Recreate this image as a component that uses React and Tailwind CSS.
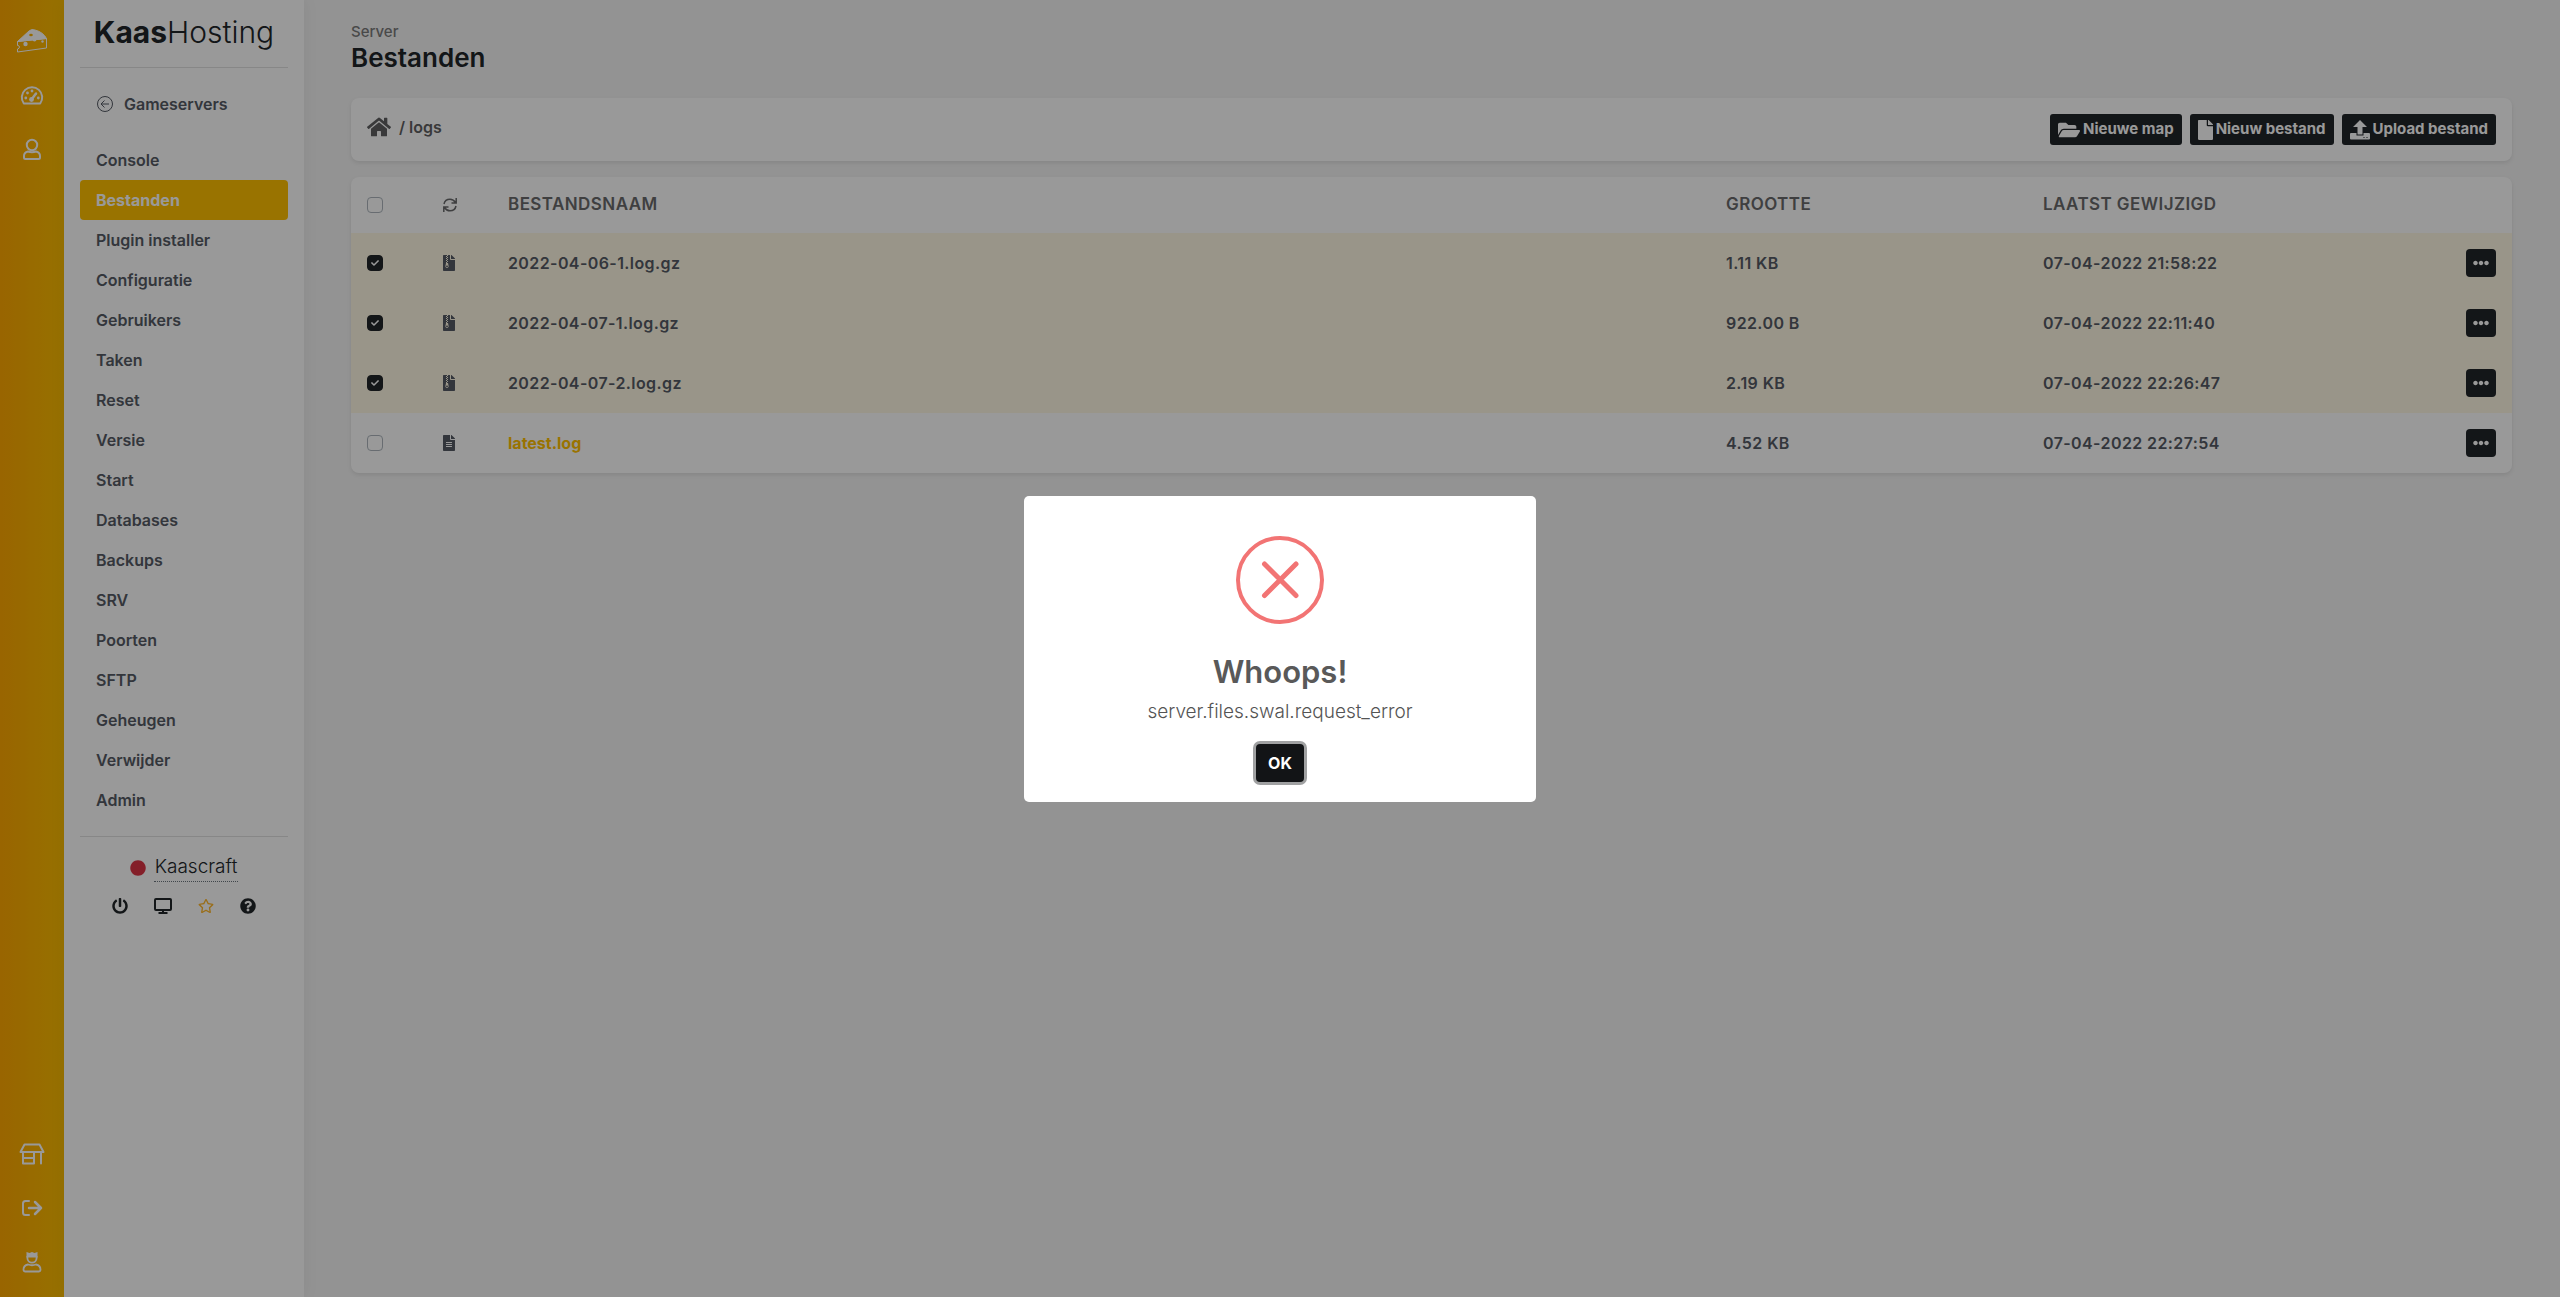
import React, { useState } from 'react';
import {
  FaHome,
  FaFolderOpen,
  FaFile,
  FaFileArchive,
  FaFileAlt,
  FaEllipsisH,
  FaPowerOff,
  FaRegStar,
  FaQuestionCircle,
  FaCircle,
  FaCheck,
} from 'react-icons/fa';

const menuItems = [
  'Console',
  'Bestanden',
  'Plugin installer',
  'Configuratie',
  'Gebruikers',
  'Taken',
  'Reset',
  'Versie',
  'Start',
  'Databases',
  'Backups',
  'SRV',
  'Poorten',
  'SFTP',
  'Geheugen',
  'Verwijder',
  'Admin',
];

const files = [
  { name: '2022-04-06-1.log.gz', size: '1.11 KB', date: '07-04-2022 21:58:22', archive: true },
  { name: '2022-04-07-1.log.gz', size: '922.00 B', date: '07-04-2022 22:11:40', archive: true },
  { name: '2022-04-07-2.log.gz', size: '2.19 KB', date: '07-04-2022 22:26:47', archive: true },
  { name: 'latest.log', size: '4.52 KB', date: '07-04-2022 22:27:54', archive: false },
];

function CheeseIcon() {
  return (
    <svg viewBox="0 0 32 28" className="w-8 h-7" fill="none" stroke="currentColor" strokeWidth="1">
      <path d="M1.500 14.500 13 4Q15.500 1.500 19 3 27 5 30.500 11.500Z" fill="currentColor" />
      <path d="M1.500 14.500 30.500 11.500V21L1.500 25V22Q3.500 21.500 3.500 20T1.500 18.500Z" />
      <circle cx="9.500" cy="17" r="2.200" fill="currentColor" stroke="none" />
      <path d="M16.500 12.500A2 2 0 0 0 20.500 12.500Z" fill="currentColor" stroke="none" />
      <circle cx="26.500" cy="14.500" r="1.200" fill="currentColor" stroke="none" />
      <ellipse cx="15" cy="8" rx="1.800" ry="1.200" fill="#fbb300" stroke="none" />
    </svg>
  );
}

function GaugeIcon() {
  return (
    <svg viewBox="0 0 24 24" className="size-6" fill="none" stroke="currentColor" strokeWidth="2">
      <path d="M3.800 20.500A10.200 10.200 0 1 1 20.200 20.500Z" strokeLinejoin="round" />
      <path d="M11.500 16.500 16 10.500" strokeWidth="2.500" strokeLinecap="round" />
      <g fill="currentColor" stroke="none">
        <circle cx="11.500" cy="16.500" r="2.400" />
        <circle cx="12" cy="8" r="1.400" />
        <circle cx="7.500" cy="10" r="1.400" />
        <circle cx="5.800" cy="15" r="1.400" />
        <circle cx="18.300" cy="15" r="1.400" />
      </g>
    </svg>
  );
}

function UserIcon() {
  return (
    <svg viewBox="0 0 24 24" className="size-6" fill="none" stroke="currentColor" strokeWidth="2">
      <circle cx="12" cy="8" r="5.200" />
      <path
        d="M8 14.500Q4 15.500 4 19V20.500Q4 22 5.500 22H18.500Q20 22 20 20.500V19Q20 15.500 16 14.500 12 16 8 14.500Z"
        strokeLinejoin="round"
      />
    </svg>
  );
}

function ShopIcon() {
  return (
    <svg viewBox="0 0 26 22" className="w-[26px] h-[22px]" fill="none" stroke="currentColor" strokeWidth="2" strokeLinejoin="round" strokeLinecap="round">
      <path d="M5.500 1.500H20.500L24.500 9H1.500Z" />
      <path d="M4 9V20.500H15V9M22 9V20.500M4 15H15" />
    </svg>
  );
}

function LogoutIcon() {
  return (
    <svg viewBox="0 0 22 18" className="w-[22px] h-[18px]" fill="none" stroke="currentColor" strokeWidth="2" strokeLinejoin="round" strokeLinecap="round">
      <path d="M8 2H4.500Q2 2 2 4.500V13.500Q2 16 4.500 16H8" />
      <path d="M8 9H20M14 3 20 9 14 15" strokeWidth="2.500" />
    </svg>
  );
}

function AdminIcon() {
  return (
    <svg viewBox="0 0 20 22" className="w-5 h-[22px]" fill="none" stroke="currentColor" strokeWidth="1.800">
      <path d="M4.500 1 7.500 2 10 1 12.500 2 15.500 1V6.500H4.500Z" fill="currentColor" stroke="none" />
      <path d="M5.400 5V7A4.600 4.600 0 0 0 14.600 7V5" />
      <path
        d="M6 13.500Q1.500 14.500 1.500 18.500 1.500 20.500 3 20.500H17Q18.500 20.500 18.500 18.500 18.500 14.500 14 13.500 10 15 6 13.500Z"
        strokeLinejoin="round"
      />
    </svg>
  );
}

function RefreshIcon() {
  return (
    <svg viewBox="0 0 14 14" className="size-3.5" fill="none" stroke="currentColor" strokeWidth="1.500">
      <path d="M1 6Q2 1.200 7 1.200 10.500 1.200 12.500 4.500M13.200 0V5H8.500" />
      <path d="M13 8Q12 12.800 7 12.800 3.500 12.800 1.500 9.500M.8 14V9H5.500" />
    </svg>
  );
}

function MonitorIcon() {
  return (
    <svg viewBox="0 0 18 16" className="w-[18px] h-4" fill="none" stroke="currentColor" strokeWidth="2">
      <rect x="1" y="1" width="16" height="11" rx="1" />
      <path d="M9 12V15M4.500 15H13.500" />
    </svg>
  );
}

function UploadIcon() {
  return (
    <svg viewBox="0 0 20 20" className="size-5" fill="currentColor">
      <path d="M10 0 17 7H12.500V14.500H7.500V7H3Z" />
      <path d="M1 13H6.500V15.500H13.500V13H19Q20 13 20 14V18.500Q20 19.500 19 19.500H1Q0 19.500 0 18.500V14Q0 13 1 13Z" />
      <path d="M13.500 17h1v1h-1zM16.500 17h1v1h-1z" fill="#212529" />
    </svg>
  );
}

function BackIcon() {
  return (
    <svg viewBox="0 0 18 18" className="size-[18px]" fill="none" stroke="currentColor">
      <circle cx="9" cy="9" r="7.500" />
      <path d="M13 9H5M8.500 5.500 5 9 8.500 12.500" />
    </svg>
  );
}

function Checkbox({ checked, onChange, label }) {
  return (
    <label className="grid size-4 shrink-0">
      <input
        type="checkbox"
        aria-label={label}
        checked={checked}
        onChange={onChange}
        className="peer col-start-1 row-start-1 size-4 appearance-none rounded-[4px] border border-[#adb5bd] checked:border-[#212529] checked:bg-[#212529]"
      />
      <FaCheck className="pointer-events-none col-start-1 row-start-1 size-2 place-self-center text-white opacity-0 peer-checked:opacity-100" />
    </label>
  );
}

function ToolButton({ icon, children }) {
  return (
    <button type="button" className="flex h-[31px] items-center gap-[3px] rounded-[3px] bg-[#212529] px-2 text-[15px] font-bold text-white">
      {icon}
      {children}
    </button>
  );
}

function RailLink({ label, children }) {
  return (
    <a href="#" aria-label={label} className="flex h-[54px] w-full items-center justify-center">
      {children}
    </a>
  );
}

export default function App() {
  const [selected, setSelected] = useState([0, 1, 2]);
  const [showError, setShowError] = useState(true);

  const toggle = (index) => {
    setSelected(selected.includes(index) ? selected.filter((i) => i !== index) : [...selected, index]);
  };

  const toggleAll = () => {
    setSelected(selected.length === files.length ? [] : files.map((_, i) => i));
  };

  return (
    <div className="flex min-h-screen bg-[#f5f5f5] font-[Inter,sans-serif] text-[#212529]">
      {/* Rail */}
      <nav className="flex w-16 shrink-0 flex-col items-center justify-between bg-linear-to-r from-[#ffa800] to-[#fbbd00] text-white">
        <div className="w-full pt-[14px]">
          <RailLink label="Home"><CheeseIcon /></RailLink>
          <RailLink label="Dashboard"><GaugeIcon /></RailLink>
          <RailLink label="Account"><UserIcon /></RailLink>
        </div>
        <div className="w-full pb-2">
          <RailLink label="Winkel"><ShopIcon /></RailLink>
          <RailLink label="Uitloggen"><LogoutIcon /></RailLink>
          <RailLink label="Beheer"><AdminIcon /></RailLink>
        </div>
      </nav>

      {/* Sidebar */}
      <aside className="w-60 shrink-0 bg-white px-4 shadow-[0_0_16px_rgba(0,0,0,0.06)]">
        <div className="flex h-[68px] justify-center border-b border-[#e2e2e2] pt-3 text-[30px] leading-10">
          <span className="font-bold">Kaas</span>
          <span className="font-light">Hosting</span>
        </div>
        <a href="#" className="mt-4 flex h-10 items-center gap-2.5 pl-4 font-semibold text-[#555a64]">
          <BackIcon />
          Gameservers
        </a>
        <ul className="mt-4">
          {menuItems.map((item) => (
            <li key={item}>
              <a
                href="#"
                className={
                  item === 'Bestanden'
                    ? 'flex h-10 items-center rounded-[4px] bg-[#ffc000] px-4 font-bold text-white'
                    : 'flex h-10 items-center rounded-[4px] px-4 font-semibold text-[#555a64]'
                }
              >
                {item}
              </a>
            </li>
          ))}
        </ul>
        <div className="mt-4 border-t border-[#e2e2e2] pt-4">
          <div className="flex items-center justify-center gap-2">
            <FaCircle className="size-4 text-[#dc3545]" />
            <a href="#" className="border-b border-dotted border-[#6c757d] px-px text-[19px] leading-7 font-light">Kaascraft</a>
          </div>
          <div className="mt-4 flex justify-center gap-[26px]">
            <button type="button" aria-label="Power"><FaPowerOff className="size-4" /></button>
            <button type="button" aria-label="Console"><MonitorIcon /></button>
            <button type="button" aria-label="Favoriet"><FaRegStar className="size-4 text-[#ffb72b]" /></button>
            <button type="button" aria-label="Help"><FaQuestionCircle className="size-4" /></button>
          </div>
        </div>
      </aside>

      {/* Content */}
      <main className="min-w-0 flex-1 pt-5 pr-12 pl-[47px]">
        <p className="text-[15px] leading-6 font-medium text-[#7b7b7b]">Server</p>
        <h1 className="text-[26px] leading-7 font-semibold">Bestanden</h1>

        <section className="mt-[26px] flex h-[63px] items-start justify-between rounded-lg bg-white p-4 shadow-[0_2px_4px_rgba(0,0,0,0.09)]">
          <div className="flex h-[26px] items-center gap-2 font-semibold text-[#5f6062]">
            <a href="#" aria-label="Hoofdmap"><FaHome className="size-6" /></a>
            <span>/ logs</span>
          </div>
          <div className="flex gap-2">
            <ToolButton icon={<FaFolderOpen className="size-[22px]" />}>Nieuwe map</ToolButton>
            <ToolButton icon={<FaFile className="h-5 w-[15px]" />}>Nieuw bestand</ToolButton>
            <ToolButton icon={<UploadIcon />}>Upload bestand</ToolButton>
          </div>
        </section>

        <section className="mt-4 overflow-hidden rounded-lg bg-white shadow-[0_2px_4px_rgba(0,0,0,0.09)]">
          <table className="w-full table-fixed text-left font-semibold">
            <colgroup>
              <col className="w-[76px]" />
              <col className="w-[65px]" />
              <col />
              <col className="w-[317px]" />
              <col className="w-[317px]" />
              <col className="w-[168px]" />
            </colgroup>
            <thead>
              <tr className="h-14 text-[17px] tracking-wide text-[#696a6c]">
                <th className="pl-4">
                  <Checkbox label="Alles selecteren" checked={selected.length === files.length} onChange={toggleAll} />
                </th>
                <th className="pl-4">
                  <button type="button" aria-label="Vernieuwen" className="flex"><RefreshIcon /></button>
                </th>
                <th className="pl-4 font-semibold">BESTANDSNAAM</th>
                <th className="pl-4 font-semibold">GROOTTE</th>
                <th className="pl-4 font-semibold">LAATST GEWIJZIGD</th>
                <th aria-label="Acties" />
              </tr>
            </thead>
            <tbody className="text-[#555a64]">
              {files.map((file, index) => (
                <tr key={file.name} className={selected.includes(index) ? 'h-[60px] bg-[#fff8e5]' : 'h-[60px]'}>
                  <td className="pl-4">
                    <Checkbox label={file.name} checked={selected.includes(index)} onChange={() => toggle(index)} />
                  </td>
                  <td className="pl-4">
                    {file.archive ? <FaFileArchive className="h-4 w-3" /> : <FaFileAlt className="h-4 w-3" />}
                  </td>
                  <td className="pl-4">
                    {file.archive ? (
                      <span className="tracking-wide">{file.name}</span>
                    ) : (
                      <a href="#" className="font-bold text-[#ffc000]">{file.name}</a>
                    )}
                  </td>
                  <td className="pl-4 tracking-wide">{file.size}</td>
                  <td className="pl-4 tracking-wide">{file.date}</td>
                  <td className="pr-4">
                    <button type="button" aria-label="Acties" className="ml-auto flex h-7 w-[30px] items-center justify-center rounded-[4px] bg-[#212529] text-white">
                      <FaEllipsisH className="size-4" />
                    </button>
                  </td>
                </tr>
              ))}
            </tbody>
          </table>
        </section>
      </main>

      {/* Error dialog */}
      {showError && (
        <div className="fixed inset-0 z-50 flex items-center justify-center bg-black/40">
          <div role="dialog" aria-modal="true" aria-labelledby="dialog-title" className="flex w-lg flex-col items-center rounded-[5px] bg-white pt-10 pb-5">
            <svg viewBox="0 0 88 88" className="size-[88px]" fill="none" stroke="#f27474" strokeWidth="4">
              <circle cx="44" cy="44" r="42" />
              <path d="M28.500 28 60 59.500M60 28 28.500 59.500" strokeWidth="5" strokeLinecap="round" />
            </svg>
            <h2 id="dialog-title" className="mt-7 text-[31px] leading-10 font-semibold text-[#595959]">Whoops!</h2>
            <p className="mt-2 text-[19px] leading-6 font-light text-[#545454]">server.files.swal.request_error</p>
            <button
              type="button"
              onClick={() => setShowError(false)}
              className="mt-5 h-[38px] rounded-[4px] bg-[#121416] px-3 font-bold text-white shadow-[0_0_0_3px_#a0a1a2]"
            >
              OK
            </button>
          </div>
        </div>
      )}
    </div>
  );
}
